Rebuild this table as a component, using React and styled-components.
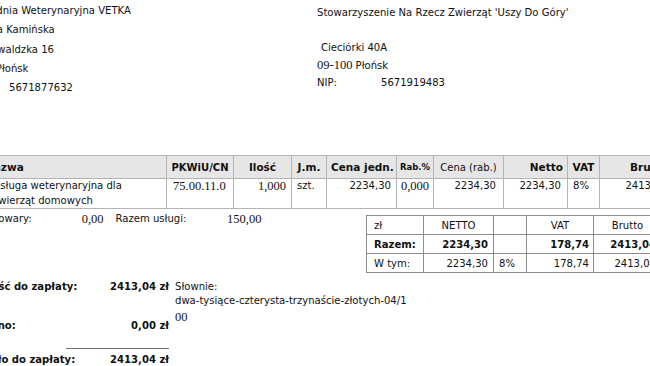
import React from 'react';
import styled, { createGlobalStyle } from 'styled-components';

const GlobalStyle = createGlobalStyle`
  html, body {
    margin: 0;
    padding: 0;
    background: #fff;
    overflow: hidden;
  }
  body {
    font-family: "DejaVu Sans Condensed", "DejaVu Sans", sans-serif;
    font-size: 11.2px;
    color: #111;
  }
`;

const Page = styled.div`
  width: 760px;
  margin-left: -43px;
`;

const Parties = styled.div`
  display: flex;
  height: 98px;
`;

const Party = styled.div`
  width: ${p => p.$w}px;
  padding-top: ${p => p.$top}px;
  line-height: ${p => p.$lh}px;
`;

const Line = styled.div`
  display: flex;
  margin-left: ${p => p.$indent || 0}px;
  min-height: 1em;
`;

const Label = styled.span`
  width: ${p => p.$w}px;
  flex: none;
`;

const Serif = styled.span`
  font-family: "Liberation Serif", "Times New Roman", serif;
  font-size: 12.5px;
`;

const Items = styled.table`
  margin: 57px 0 0 23px;
  border-collapse: collapse;
  table-layout: fixed;
  width: 692px;
`;

const Col = styled.col`
  width: ${p => p.$w}px;
`;

const Th = styled.th`
  height: 22px;
  padding: 0 ${p => p.$pad || 4}px;
  background: #e6e6e6;
  border: 1px solid #b4b4b4;
  font-family: "DejaVu Sans", sans-serif;
  font-size: ${p => p.$size || 10.5}px;
  font-weight: ${p => (p.$light ? 400 : 700)};
  text-align: ${p => p.$align || 'center'};
  white-space: nowrap;
  color: #111;
`;

const Td = styled.td`
  height: 29px;
  padding: 0 ${p => p.$pr || 5}px 0 ${p => p.$pl || 5}px;
  border: 1px solid #b4b4b4;
  vertical-align: top;
  line-height: 14.5px;
  text-align: ${p => p.$align || 'left'};
  white-space: ${p => (p.$wrap ? 'normal' : 'nowrap')};
`;

const TotalsRow = styled.div`
  display: flex;
  align-items: flex-start;
`;

const ServiceTotals = styled.div`
  width: 409px;
  margin-top: 3px;
  display: flex;
  line-height: 14px;
`;

const Caption = styled.span`
  margin-left: ${p => p.$ml || 0}px;
`;

const Amount = styled.span`
  width: ${p => p.$w}px;
  text-align: right;
`;

const Summary = styled.table`
  margin-top: 6px;
  border-collapse: collapse;
  table-layout: fixed;
  width: 295px;
`;

const SumTd = styled.td`
  height: 18px;
  padding: 0 ${p => p.$pr || 5}px 0 ${p => p.$pl || 5}px;
  border: 1px solid #8e8e8e;
  text-align: ${p => p.$align || 'left'};
  font-weight: ${p => (p.$bold ? 700 : 400)};
  white-space: nowrap;
`;

const Payment = styled.div`
  display: flex;
  margin-top: 7px;
`;

const PayColumn = styled.div`
  width: 219px;
  margin-left: -4px;
  flex: none;
`;

const PayRow = styled.div`
  display: flex;
  justify-content: space-between;
  width: 216px;
  line-height: 14px;
  font-weight: 700;
  margin-top: ${p => p.$mt || 0}px;
`;

const Rule = styled.div`
  margin: 15px 0 0 113px;
  width: 103px;
  border-top: 1px solid #777;
`;

const Words = styled.div`
  padding-left: 3px;
`;

const WordsLabel = styled.div`
  line-height: 13px;
`;

const WordsText = styled.div`
  line-height: 16px;
`;

export default function App() {
  return (
    <>
      <GlobalStyle />
      <Page>
        <Parties>
          <Party $w={360} $top={1} $lh={19.3}>
            <Line>Przychodnia Weterynaryjna VETKA</Line>
            <Line $indent={-5}>Agnieszka Kamińska</Line>
            <Line>ul. Grunwaldzka 16</Line>
            <Line>09-100 Płońsk</Line>
            <Line><Label $w={52}>NIP:</Label>5671877632</Line>
          </Party>
          <Party $w={360} $top={4} $lh={17.5}>
            <Line>Stowarzyszenie Na Rzecz Zwierząt 'Uszy Do Góry'</Line>
            <Line>&nbsp;</Line>
            <Line $indent={4}>Cieciórki&nbsp;40A</Line>
            <Line><Serif>09-100</Serif>&nbsp;Płońsk</Line>
            <Line><Label $w={64}>NIP:</Label>5671919483</Line>
          </Party>
        </Parties>

        <Items>
          <colgroup>
            <Col $w={186} />
            <Col $w={67} />
            <Col $w={58} />
            <Col $w={35} />
            <Col $w={70} />
            <Col $w={37} />
            <Col $w={70} />
            <Col $w={64} />
            <Col $w={32} />
            <Col $w={73} />
          </colgroup>
          <thead>
            <tr>
              <Th $align="left">Nazwa</Th>
              <Th $size={10}>PKWiU/CN</Th>
              <Th>Ilość</Th>
              <Th>J.m.</Th>
              <Th>Cena jedn.</Th>
              <Th $size={8.5} $pad={1}>Rab.%</Th>
              <Th $size={10} $light>Cena (rab.)</Th>
              <Th $align="right">Netto</Th>
              <Th $pad={1}>VAT</Th>
              <Th $align="right">Brutto</Th>
            </tr>
          </thead>
          <tbody>
            <tr>
              <Td $pl={12} $wrap>Usługa weterynaryjna dla zwierząt domowych</Td>
              <Td $pl={6}><Serif>75.00.11.0</Serif></Td>
              <Td $align="right"><Serif>1,000</Serif></Td>
              <Td>szt.</Td>
              <Td $align="right">2234,30</Td>
              <Td $align="center" $pl={1} $pr={1}><Serif>0,000</Serif></Td>
              <Td $align="right" $pr={7}>2234,30</Td>
              <Td $align="right" $pr={6}>2234,30</Td>
              <Td>8%</Td>
              <Td $align="right">2413,04</Td>
            </tr>
          </tbody>
        </Items>

        <TotalsRow>
          <ServiceTotals>
            <Caption>Razem towary:</Caption>
            <Amount $w={72}><Serif>0,00</Serif></Amount>
            <Caption $ml={12}>Razem usługi:</Caption>
            <Amount $w={75}><Serif>150,00</Serif></Amount>
          </ServiceTotals>
          <Summary>
            <colgroup>
              <Col $w={57} />
              <Col $w={70} />
              <Col $w={33} />
              <Col $w={67} />
              <Col $w={68} />
            </colgroup>
            <tbody>
              <tr>
                <SumTd $pl={7}>zł</SumTd>
                <SumTd $align="center">NETTO</SumTd>
                <SumTd />
                <SumTd $align="center">VAT</SumTd>
                <SumTd $align="center">Brutto</SumTd>
              </tr>
              <tr>
                <SumTd $pl={7} $bold>Razem:</SumTd>
                <SumTd $align="right" $bold>2234,30</SumTd>
                <SumTd />
                <SumTd $align="right" $pr={4} $bold>178,74</SumTd>
                <SumTd $align="right" $bold>2413,04</SumTd>
              </tr>
              <tr>
                <SumTd $pl={7}>W tym:</SumTd>
                <SumTd $align="right">2234,30</SumTd>
                <SumTd>8%</SumTd>
                <SumTd $align="right" $pr={4}>178,74</SumTd>
                <SumTd $align="right">2413,04</SumTd>
              </tr>
            </tbody>
          </Summary>
        </TotalsRow>

        <Payment>
          <PayColumn>
            <PayRow>
              <span>Należność do zapłaty:</span>
              <span>2413,04 zł</span>
            </PayRow>
            <PayRow $mt={25}>
              <span>Zapłacono:</span>
              <span>0,00 zł</span>
            </PayRow>
            <Rule />
            <PayRow $mt={4}>
              <span>Pozostało do zapłaty:</span>
              <span>2413,04 zł</span>
            </PayRow>
          </PayColumn>
          <Words>
            <WordsLabel>Słownie:</WordsLabel>
            <WordsText>
              dwa-tysiące-czterysta-trzynaście-złotych-04/1
              <br />
              <Serif>00</Serif>
            </WordsText>
          </Words>
        </Payment>
      </Page>
    </>
  );
}
